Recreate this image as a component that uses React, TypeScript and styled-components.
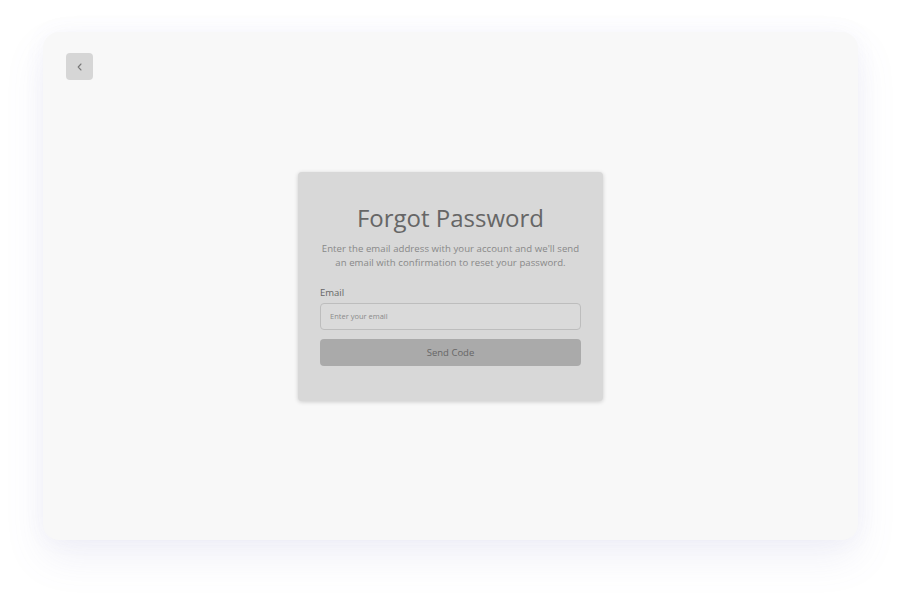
import React from "react";
import styled, { createGlobalStyle } from "styled-components";

const Global = createGlobalStyle`
  html, body { margin: 0; padding: 0; background: #ffffff; }
  body { font-family: "Open Sans", "Noto Sans", sans-serif; }
  * { box-sizing: border-box; }
`;

const Page = styled.div`
  width: 901px;
  height: 595px;
  padding: 32px 43px 55px 43px;
  background: #ffffff;
`;

const Panel = styled.div`
  height: 100%;
  border-radius: 16px;
  background: #f8f8f8;
  box-shadow: 0 18px 40px rgba(120, 120, 190, 0.1), 0 0 22px rgba(120, 120, 190, 0.05);
  display: grid;
  grid-template: 1fr / 1fr;
  place-items: center;
`;

const BackButton = styled.button`
  grid-area: 1 / 1;
  align-self: start;
  justify-self: start;
  margin: 21px 0 0 23px;
  width: 27px;
  height: 27px;
  border: none;
  border-radius: 4px;
  background: #d6d6d6;
  display: flex;
  align-items: center;
  justify-content: center;
  padding: 0;
  color: #777;
  cursor: pointer;
`;

const Card = styled.div`
  grid-area: 1 / 1;
  width: 305px;
  height: 229px;
  background: #d8d8d8;
  border-radius: 4px;
  box-shadow: 0 1px 4px rgba(0, 0, 0, 0.18);
  padding: 31px 22px 0 22px;
  display: flex;
  flex-direction: column;
`;

const Title = styled.h1`
  margin: 0;
  text-align: center;
  font-size: 24px;
  font-weight: 500;
  line-height: 30px;
  color: #666666;
`;

const Subtitle = styled.p`
  margin: 9px 0 0 0;
  text-align: center;
  font-size: 9.6px;
  letter-spacing: 0.05px;
  line-height: 14px;
  color: #888888;
`;

const Label = styled.label`
  margin-top: 16px;
  font-size: 9.5px;
  line-height: 14px;
  color: #666666;
`;

const Input = styled.input`
  margin-top: 3px;
  width: 100%;
  height: 27px;
  border: 1px solid #bdbdbd;
  border-radius: 4px;
  background: #dadada;
  padding: 0 9px;
  font-family: inherit;
  font-size: 7.5px;
  color: #666;
  outline: none;
  &::placeholder { color: #8a8a8a; }
`;

const SendButton = styled.button`
  margin-top: 9px;
  width: 100%;
  height: 27px;
  border: none;
  border-radius: 4px;
  background: #aaaaaa;
  font-family: inherit;
  font-size: 9.5px;
  color: #666666;
  cursor: pointer;
`;

export default function App() {
  return (
    <>
      <Global />
      <Page>
        <Panel>
          <BackButton aria-label="Back">
            <svg width="10" height="10" viewBox="0 0 10 10" fill="none">
              <path d="M6 2 L3.2 5 L6 8" stroke="#777" strokeWidth="1.1" strokeLinecap="round" strokeLinejoin="round" />
            </svg>
          </BackButton>
          <Card>
            <Title>Forgot Password</Title>
            <Subtitle>
              Enter the email address with your account and we'll send
              <br />
              an email with confirmation to reset your password.
            </Subtitle>
            <Label htmlFor="email">Email</Label>
            <Input id="email" placeholder="Enter your email" />
            <SendButton>Send Code</SendButton>
          </Card>
        </Panel>
      </Page>
    </>
  );
}
